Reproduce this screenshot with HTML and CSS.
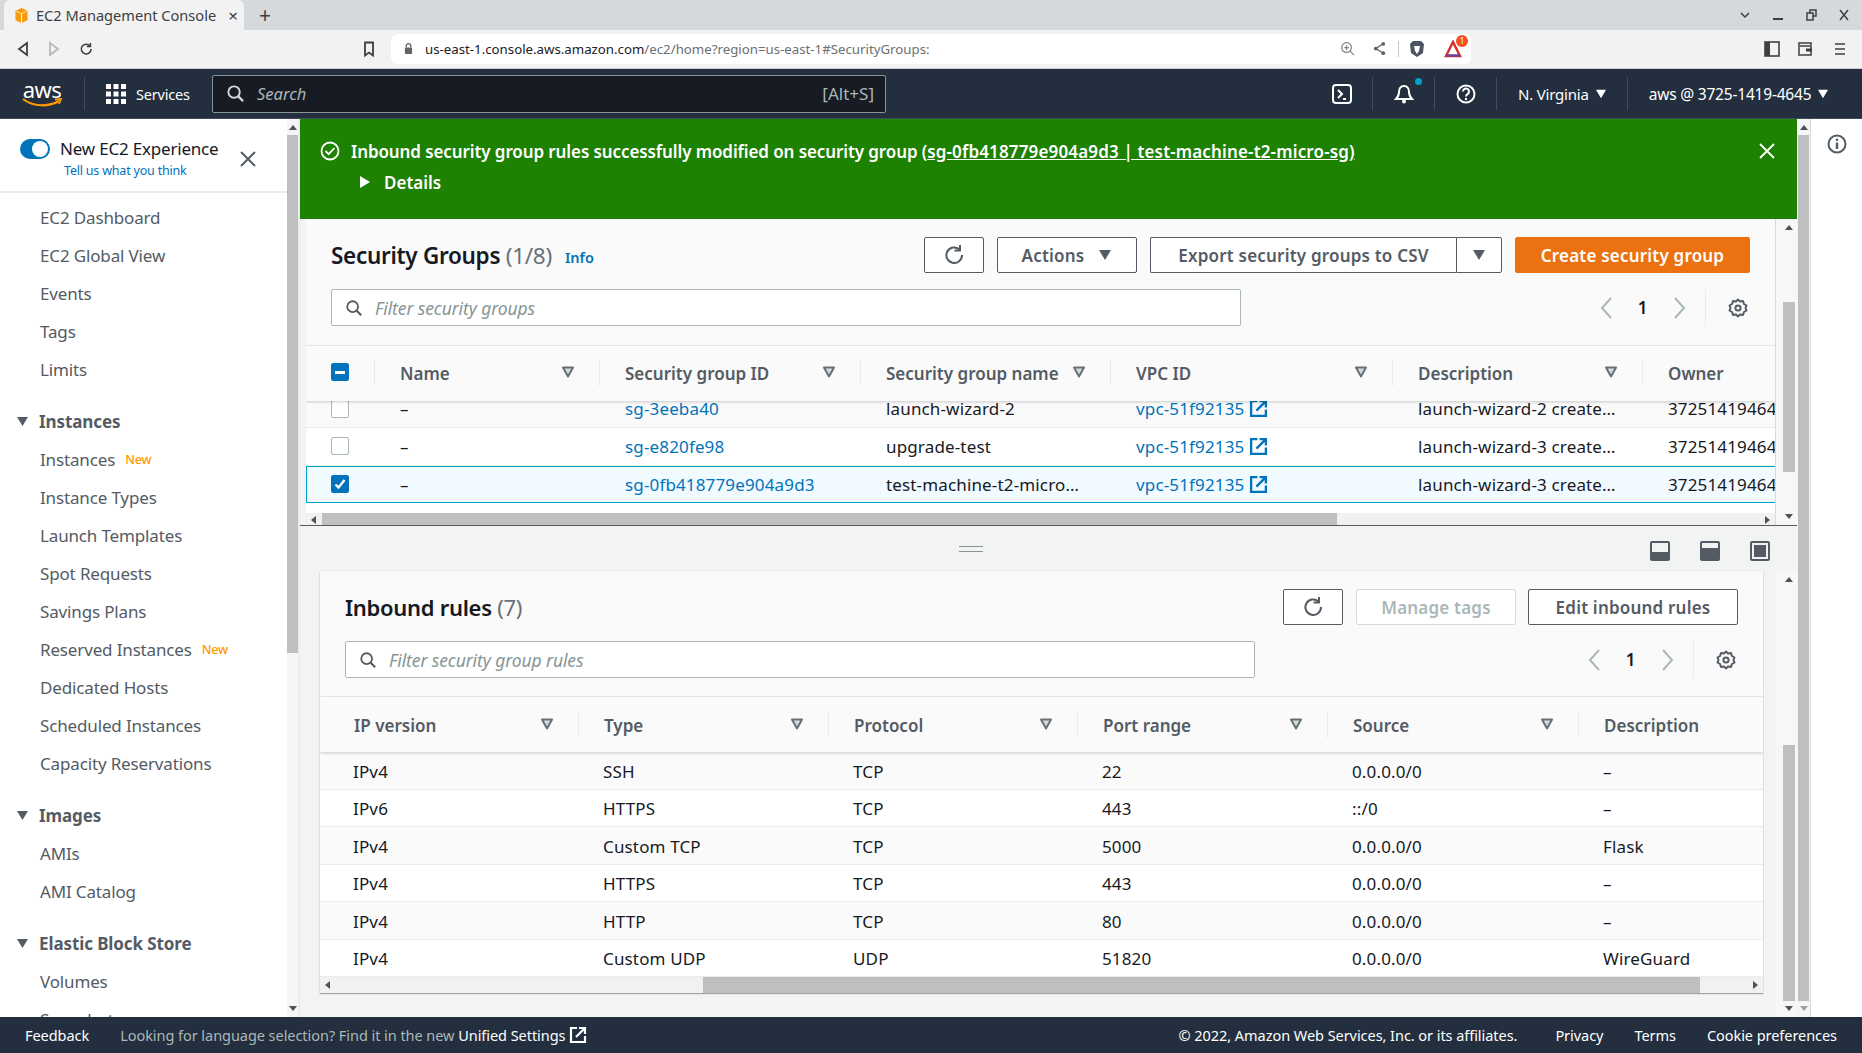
FILE: index.html
```html
<!DOCTYPE html>
<html lang="en">

<head>
  <meta charset="UTF-8">
  <meta name="viewport" content="width=device-width, initial-scale=1.0">
  <title>EC2 Management Console</title>
  <link rel="stylesheet" href="styles.css">
</head>

<body>
  <!-- shared icons -->
  <svg class="sprite" xmlns="http://www.w3.org/2000/svg">
    <symbol id="i-sort" viewBox="0 0 14 14"><path d="M2 2.500h10L7 11.500z" fill="#d5dbdb" stroke="#687078" stroke-width="2" stroke-linejoin="round"/></symbol>
    <symbol id="i-ext" viewBox="0 0 18 18"><path d="M8 2H2v14h14v-6" fill="none" stroke="currentColor" stroke-width="2.200"/><path d="M7 11l8-8M10 2h6v6" fill="none" stroke="currentColor" stroke-width="2.200"/></symbol>
    <symbol id="i-refresh" viewBox="0 0 22 22"><path d="M16.500 5.500a7.800 7.800 0 1 0 2.500 5.500" fill="none" stroke="#545b64" stroke-width="2"/><path d="M17 1v5.500h-5.500" fill="none" stroke="#545b64" stroke-width="2"/></symbol>
    <symbol id="i-search" viewBox="0 0 20 20"><circle cx="8.500" cy="8.500" r="6" fill="none" stroke="currentColor" stroke-width="2"/><path d="M13 13l5 5" stroke="currentColor" stroke-width="2.400"/></symbol>
    <symbol id="i-gear" viewBox="0 0 20 20"><path d="M10 1.500l2 2 3-.4 1 2.900 2.500 1.500-1 2.500 1 2.500-2.500 1.500-1 2.900-3-.4-2 2-2-2-3 .4-1-2.900L1.500 12.500l1-2.500-1-2.500L4 6l1-2.900 3 .4z" fill="none" stroke="#545b64" stroke-width="2" stroke-linejoin="round"/><circle cx="10" cy="10" r="2.600" fill="none" stroke="#545b64" stroke-width="2"/></symbol>
    <symbol id="i-left" viewBox="0 0 14 24"><path d="M12 2L3 12l9 10" fill="none" stroke="#aab7b8" stroke-width="2"/></symbol>
    <symbol id="i-right" viewBox="0 0 14 24"><path d="M2 2l9 10-9 10" fill="none" stroke="#aab7b8" stroke-width="2"/></symbol>
    <symbol id="i-caret" viewBox="0 0 14 12"><path d="M1 1h12L7 11z" fill="currentColor"/></symbol>
    <symbol id="i-check" viewBox="0 0 16 16"><path d="M3.500 8.500l3 3 6-7.500" fill="none" stroke="#fff" stroke-width="2.400"/></symbol>
  </svg>

  <div class="tabstrip">
    <div class="tab">
      <svg class="favicon" viewBox="0 0 14 16"><path d="M7 0l6.500 3v10L7 16 .5 13V3z" fill="#f39c12"/><path d="M7 6v10" stroke="#fff" stroke-width="1"/><path d="M.5 3L7 6l6.500-3" fill="none" stroke="#fde3a7" stroke-width="1"/></svg>
      <span class="tab-title">EC2 Management Console</span>
      <span class="tab-close">×</span>
    </div>
    <span class="tab-new">+</span>
    <div class="window-btns">
      <svg viewBox="0 0 12 12"><path d="M2 4l4 4 4-4" fill="none" stroke="#3c4043" stroke-width="1.500"/></svg>
      <svg viewBox="0 0 12 12"><path d="M1 10h10" stroke="#3c4043" stroke-width="2"/></svg>
      <svg viewBox="0 0 12 12"><path d="M2 4h6v7H2zM5 4V1h6v6H8" fill="none" stroke="#3c4043" stroke-width="1.500"/></svg>
      <svg viewBox="0 0 12 12"><path d="M2 1l8 10M10 1L2 11" stroke="#3c4043" stroke-width="1.500"/></svg>
    </div>
  </div>

  <div class="toolbar">
    <svg class="tool-ic back" viewBox="0 0 14 16"><path d="M11 2L3 8l8 6z" fill="none" stroke="#3c4043" stroke-width="1.800"/></svg>
    <svg class="tool-ic fwd" viewBox="0 0 14 16"><path d="M3 2l8 6-8 6z" fill="none" stroke="#b5b9bd" stroke-width="1.800"/></svg>
    <svg class="tool-ic reload" viewBox="0 0 16 16"><path d="M12.500 4.500a5.600 5.600 0 1 0 1.300 3.500" fill="none" stroke="#3c4043" stroke-width="1.800"/><path d="M13 1v4H9" fill="none" stroke="#3c4043" stroke-width="1.800"/></svg>
    <svg class="tool-ic bookmark" viewBox="0 0 12 16"><path d="M2 1.500h8v13l-4-3-4 3z" fill="none" stroke="#3c4043" stroke-width="1.800"/></svg>
    <div class="address">
      <svg class="lock" viewBox="0 0 10 14"><path d="M2.500 6V4a2.500 2.500 0 0 1 5 0v2" fill="none" stroke="#5f6368" stroke-width="1.400"/><rect x="1" y="6" width="8" height="7" rx="1" fill="#5f6368"/></svg>
      <span class="url"><span class="url-host">us-east-1.console.aws.amazon.com</span>/ec2/home?region=us-east-1#SecurityGroups:</span>
      <svg class="addr-ic zoom-ic" viewBox="0 0 16 16"><circle cx="7" cy="7" r="5.200" fill="none" stroke="#80868b" stroke-width="1.300"/><path d="M11 11l4 4M7 4.500v5M4.500 7h5" stroke="#80868b" stroke-width="1.300"/></svg>
      <svg class="addr-ic share-ic" viewBox="0 0 16 16"><path d="M12 3L4 8l8 5" fill="none" stroke="#5f6368" stroke-width="1.400"/><circle cx="12" cy="3" r="2" fill="#5f6368"/><circle cx="4" cy="8" r="2" fill="#5f6368"/><circle cx="12" cy="13" r="2" fill="#5f6368"/></svg>
      <span class="addr-sep"></span>
      <svg class="addr-ic brave-ic" viewBox="0 0 16 18"><path d="M4 1h8l3 3-1 9-6 4-6-4-1-9z" fill="#4b5563"/><path d="M5 6h6l-1 5-2 3-2-3z" fill="#fff"/></svg>
      <span class="rewards">
        <svg viewBox="0 0 18 18"><path d="M9 2l7 14H2z" fill="none" stroke="#d32f2f" stroke-width="2.400"/><path d="M2.500 15.500h13" stroke="#6b3fa0" stroke-width="2.400"/></svg>
        <span class="rewards-badge">1</span>
      </span>
    </div>
    <svg class="tool-ic sidebar-ic" viewBox="0 0 16 16"><rect x="1" y="1" width="14" height="14" fill="none" stroke="#3c4043" stroke-width="1.600"/><rect x="1" y="1" width="5" height="14" fill="#3c4043"/></svg>
    <svg class="tool-ic wallet-ic" viewBox="0 0 16 16"><path d="M14 4V2H2v12h12V5H3" fill="none" stroke="#3c4043" stroke-width="1.500"/><rect x="9" y="7.500" width="6" height="3" fill="#3c4043"/></svg>
    <svg class="tool-ic menu-ic" viewBox="0 0 16 16"><path d="M3 3h10M3 8h10M3 13h10" stroke="#3c4043" stroke-width="1.600"/></svg>
  </div>

  <header class="topnav">
    <div class="aws-logo">
      <span class="aws-word">aws</span>
      <svg viewBox="0 0 40 10"><path d="M1 1c10 8 26 8 36 2" fill="none" stroke="#ff9900" stroke-width="2.200"/><path d="M33 1.500l6-.5-2 5" fill="none" stroke="#ff9900" stroke-width="1.800"/></svg>
    </div>
    <span class="nav-sep first"></span>
    <svg class="grid-ic" viewBox="0 0 20 20"><path d="M0 0h5v5H0zM7.500 0h5v5h-5zM15 0h5v5h-5zM0 7.500h5v5H0zM7.500 7.500h5v5h-5zM15 7.500h5v5h-5zM0 15h5v5H0zM7.500 15h5v5h-5zM15 15h5v5h-5z" fill="#fff"/></svg>
    <span class="services">Services</span>
    <div class="search">
      <svg class="search-ic" viewBox="0 0 20 20"><use href="#i-search"/></svg>
      <span class="search-text">Search</span>
      <span class="search-key">[Alt+S]</span>
    </div>
    <svg class="nav-ic shell-ic" viewBox="0 0 20 20"><rect x="1" y="1" width="18" height="18" rx="3" fill="none" stroke="#fff" stroke-width="2"/><path d="M6 6l4 4-4 4M11 15h3" fill="none" stroke="#fff" stroke-width="2"/></svg>
    <span class="nav-sep"></span>
    <span class="bell">
      <svg class="nav-ic" viewBox="0 0 20 20"><path d="M10 2c3.500 0 5 3 5 6 0 3 1 5 3 7H2c2-2 3-4 3-7 0-3 1.500-6 5-6z" fill="none" stroke="#fff" stroke-width="2"/><circle cx="10" cy="17.500" r="2" fill="#fff"/></svg>
      <span class="bell-dot"></span>
    </span>
    <span class="nav-sep"></span>
    <svg class="nav-ic help-ic" viewBox="0 0 20 20"><circle cx="10" cy="10" r="8.500" fill="none" stroke="#fff" stroke-width="2"/><path d="M7 7.500a3 3 0 1 1 4.500 2.600c-1 .6-1.500 1.200-1.500 2.400" fill="none" stroke="#fff" stroke-width="2"/><circle cx="10" cy="15" r="1.200" fill="#fff"/></svg>
    <span class="nav-sep"></span>
    <span class="nav-menu region">N. Virginia <svg viewBox="0 0 14 12"><use href="#i-caret"/></svg></span>
    <span class="nav-sep"></span>
    <span class="nav-menu account">aws @ 3725-1419-4645 <svg viewBox="0 0 14 12"><use href="#i-caret"/></svg></span>
  </header>

  <div class="layout">
    <aside class="sidebar">
      <div class="side-col">
        <div class="experience">
          <span class="toggle"></span>
          <div class="exp-text">
            <div class="exp-title">New EC2 Experience</div>
            <div class="exp-link">Tell us what you think</div>
          </div>
          <svg class="exp-close" viewBox="0 0 16 16"><path d="M1 1l14 14M15 1L1 15" stroke="#545b64" stroke-width="2"/></svg>
        </div>
        <nav class="side-nav">
          <a class="side-item">EC2 Dashboard</a>
          <a class="side-item">EC2 Global View</a>
          <a class="side-item">Events</a>
          <a class="side-item">Tags</a>
          <a class="side-item">Limits</a>
          <div class="side-head"><svg viewBox="0 0 14 12"><use href="#i-caret"/></svg>Instances</div>
          <a class="side-item">Instances <span class="new">New</span></a>
          <a class="side-item">Instance Types</a>
          <a class="side-item">Launch Templates</a>
          <a class="side-item">Spot Requests</a>
          <a class="side-item">Savings Plans</a>
          <a class="side-item">Reserved Instances <span class="new">New</span></a>
          <a class="side-item">Dedicated Hosts</a>
          <a class="side-item">Scheduled Instances</a>
          <a class="side-item">Capacity Reservations</a>
          <div class="side-head"><svg viewBox="0 0 14 12"><use href="#i-caret"/></svg>Images</div>
          <a class="side-item">AMIs</a>
          <a class="side-item">AMI Catalog</a>
          <div class="side-head"><svg viewBox="0 0 14 12"><use href="#i-caret"/></svg>Elastic Block Store</div>
          <a class="side-item">Volumes</a>
          <a class="side-item">Snapshots</a>
        </nav>
      </div>
      <div class="vscroll side-scroll">
        <span class="arrow up"></span>
        <span class="thumb"></span>
        <span class="arrow down"></span>
      </div>
    </aside>

    <main class="main">
      <div class="banner">
        <div class="banner-line">
          <svg class="banner-ic" viewBox="0 0 20 20"><circle cx="10" cy="10" r="8.500" fill="none" stroke="#fff" stroke-width="1.800"/><path d="M5.500 10l3.200 3.200 5.800-6.200" fill="none" stroke="#fff" stroke-width="1.800"/></svg>
          <span>Inbound security group rules successfully modified on security group (<u>sg-0fb418779e904a9d3 | test-machine-t2-micro-sg)</u></span>
          <svg class="banner-close" viewBox="0 0 16 16"><path d="M1 1l14 14M15 1L1 15" stroke="#fff" stroke-width="1.800"/></svg>
        </div>
        <div class="banner-details"><span class="tri"></span>Details</div>
      </div>

      <section class="top-pane">
        <div class="top-content">
          <div class="pane-head">
            <div class="title-row">
              <h2 class="pane-title">Security Groups <span class="count">(1/8)</span></h2>
              <a class="info">Info</a>
              <div class="actions">
                <button class="btn btn-icon"><svg viewBox="0 0 22 22"><use href="#i-refresh"/></svg></button>
                <button class="btn btn-actions">Actions <svg viewBox="0 0 14 12"><use href="#i-caret"/></svg></button>
                <div class="split">
                  <button class="btn btn-export">Export security groups to CSV</button>
                  <button class="btn btn-drop"><svg viewBox="0 0 14 12"><use href="#i-caret"/></svg></button>
                </div>
                <button class="btn btn-primary">Create security group</button>
              </div>
            </div>
            <div class="filter-row">
              <div class="filter"><svg viewBox="0 0 20 20"><use href="#i-search"/></svg><span>Filter security groups</span></div>
              <div class="pager">
                <span class="pg"><svg viewBox="0 0 14 24"><use href="#i-left"/></svg></span>
                <span class="pg pg-num">1</span>
                <span class="pg"><svg viewBox="0 0 14 24"><use href="#i-right"/></svg></span>
                <span class="pg-gear"><svg viewBox="0 0 20 20"><use href="#i-gear"/></svg></span>
              </div>
            </div>
          </div>

          <div class="thead sg-cols">
            <div class="th th-check"><span class="cb cb-mixed"></span></div>
            <div class="th"><span>Name</span><svg viewBox="0 0 14 14"><use href="#i-sort"/></svg></div>
            <div class="th"><span>Security group ID</span><svg viewBox="0 0 14 14"><use href="#i-sort"/></svg></div>
            <div class="th"><span>Security group name</span><svg viewBox="0 0 14 14"><use href="#i-sort"/></svg></div>
            <div class="th"><span>VPC ID</span><svg viewBox="0 0 14 14"><use href="#i-sort"/></svg></div>
            <div class="th"><span>Description</span><svg viewBox="0 0 14 14"><use href="#i-sort"/></svg></div>
            <div class="th th-last"><span>Owner</span></div>
          </div>
          <div class="sg-rows">
            <div class="tr sg-cols clipped">
              <div class="td td-check"><span class="cb"></span></div>
              <div class="td">–</div>
              <div class="td"><a class="link">sg-3eeba40</a></div>
              <div class="td">launch-wizard-2</div>
              <div class="td"><a class="link">vpc-51f92135 <svg viewBox="0 0 18 18"><use href="#i-ext"/></svg></a></div>
              <div class="td">launch-wizard-2 create…</div>
              <div class="td">372514194645</div>
            </div>
            <div class="tr sg-cols">
              <div class="td td-check"><span class="cb"></span></div>
              <div class="td">–</div>
              <div class="td"><a class="link">sg-e820fe98</a></div>
              <div class="td">upgrade-test</div>
              <div class="td"><a class="link">vpc-51f92135 <svg viewBox="0 0 18 18"><use href="#i-ext"/></svg></a></div>
              <div class="td">launch-wizard-3 create…</div>
              <div class="td">372514194645</div>
            </div>
            <div class="tr sg-cols selected">
              <div class="td td-check"><span class="cb cb-on"><svg viewBox="0 0 16 16"><use href="#i-check"/></svg></span></div>
              <div class="td">–</div>
              <div class="td"><a class="link">sg-0fb418779e904a9d3</a></div>
              <div class="td">test-machine-t2-micro…</div>
              <div class="td"><a class="link">vpc-51f92135 <svg viewBox="0 0 18 18"><use href="#i-ext"/></svg></a></div>
              <div class="td">launch-wizard-3 create…</div>
              <div class="td">372514194645</div>
            </div>
          </div>
          <div class="hscroll sg-hscroll"><span class="arrow left"></span><span class="thumb"></span><span class="arrow right"></span></div>
        </div>
        <div class="vscroll inner-scroll top-scroll">
          <span class="arrow up"></span>
          <span class="thumb"></span>
          <span class="arrow down"></span>
        </div>
      </section>

      <section class="bottom-pane">
        <div class="split-bar">
          <span class="handle"></span>
          <div class="view-btns">
            <svg viewBox="0 0 20 20"><rect x="1" y="1" width="18" height="18" rx="1" fill="none" stroke="#545b64" stroke-width="2"/><rect x="1" y="11" width="18" height="8" fill="#545b64"/></svg>
            <svg viewBox="0 0 20 20"><rect x="1" y="1" width="18" height="18" rx="1" fill="none" stroke="#545b64" stroke-width="2"/><rect x="1" y="7" width="18" height="12" fill="#545b64"/></svg>
            <svg viewBox="0 0 20 20"><rect x="1" y="1" width="18" height="18" rx="1" fill="none" stroke="#545b64" stroke-width="2"/><rect x="4" y="4" width="12" height="12" fill="#545b64"/></svg>
          </div>
        </div>
        <div class="bottom-row">
          <div class="card-wrap">
            <div class="card">
              <div class="pane-head">
                <div class="title-row">
                  <h2 class="pane-title">Inbound rules <span class="count">(7)</span></h2>
                  <div class="actions">
                    <button class="btn btn-icon"><svg viewBox="0 0 22 22"><use href="#i-refresh"/></svg></button>
                    <button class="btn btn-disabled">Manage tags</button>
                    <button class="btn btn-edit">Edit inbound rules</button>
                  </div>
                </div>
                <div class="filter-row">
                  <div class="filter"><svg viewBox="0 0 20 20"><use href="#i-search"/></svg><span>Filter security group rules</span></div>
                  <div class="pager">
                    <span class="pg"><svg viewBox="0 0 14 24"><use href="#i-left"/></svg></span>
                    <span class="pg pg-num">1</span>
                    <span class="pg"><svg viewBox="0 0 14 24"><use href="#i-right"/></svg></span>
                    <span class="pg-gear"><svg viewBox="0 0 20 20"><use href="#i-gear"/></svg></span>
                  </div>
                </div>
              </div>
              <div class="thead rule-cols">
                <div class="th"><span>IP version</span><svg viewBox="0 0 14 14"><use href="#i-sort"/></svg></div>
                <div class="th"><span>Type</span><svg viewBox="0 0 14 14"><use href="#i-sort"/></svg></div>
                <div class="th"><span>Protocol</span><svg viewBox="0 0 14 14"><use href="#i-sort"/></svg></div>
                <div class="th"><span>Port range</span><svg viewBox="0 0 14 14"><use href="#i-sort"/></svg></div>
                <div class="th"><span>Source</span><svg viewBox="0 0 14 14"><use href="#i-sort"/></svg></div>
                <div class="th th-last"><span>Description</span></div>
              </div>
              <div class="tr rule-cols odd"><div class="td">IPv4</div><div class="td">SSH</div><div class="td">TCP</div><div class="td">22</div><div class="td">0.0.0.0/0</div><div class="td">–</div></div>
              <div class="tr rule-cols"><div class="td">IPv6</div><div class="td">HTTPS</div><div class="td">TCP</div><div class="td">443</div><div class="td">::/0</div><div class="td">–</div></div>
              <div class="tr rule-cols odd"><div class="td">IPv4</div><div class="td">Custom TCP</div><div class="td">TCP</div><div class="td">5000</div><div class="td">0.0.0.0/0</div><div class="td">Flask</div></div>
              <div class="tr rule-cols"><div class="td">IPv4</div><div class="td">HTTPS</div><div class="td">TCP</div><div class="td">443</div><div class="td">0.0.0.0/0</div><div class="td">–</div></div>
              <div class="tr rule-cols odd"><div class="td">IPv4</div><div class="td">HTTP</div><div class="td">TCP</div><div class="td">80</div><div class="td">0.0.0.0/0</div><div class="td">–</div></div>
              <div class="tr rule-cols"><div class="td">IPv4</div><div class="td">Custom UDP</div><div class="td">UDP</div><div class="td">51820</div><div class="td">0.0.0.0/0</div><div class="td">WireGuard</div></div>
              <div class="hscroll rule-hscroll"><span class="arrow left"></span><span class="thumb"></span><span class="arrow right"></span></div>
            </div>
          </div>
          <div class="vscroll inner-scroll bottom-scroll">
            <span class="arrow up"></span>
            <span class="thumb"></span>
            <span class="arrow down"></span>
          </div>
        </div>
      </section>
    </main>

    <div class="vscroll outer-scroll">
      <span class="arrow up"></span>
      <span class="thumb"></span>
      <span class="arrow down dim"></span>
    </div>

    <aside class="rail">
      <svg viewBox="0 0 20 20"><circle cx="10" cy="10" r="8.500" fill="none" stroke="#545b64" stroke-width="2"/><circle cx="10" cy="5.800" r="1.300" fill="#545b64"/><path d="M10 8.500v6.500" stroke="#545b64" stroke-width="2.400"/></svg>
    </aside>
  </div>

  <footer class="footer">
    <a class="foot-feedback">Feedback</a>
    <span class="foot-lang">Looking for language selection? Find it in the new <a>Unified Settings</a></span>
    <svg class="foot-ext" viewBox="0 0 18 18"><use href="#i-ext"/></svg>
    <span class="foot-copy">© 2022, Amazon Web Services, Inc. or its affiliates.</span>
    <a class="foot-link">Privacy</a>
    <a class="foot-link">Terms</a>
    <a class="foot-link">Cookie preferences</a>
  </footer>
</body>

</html>
```

FILE: styles.css
```css
* {
  box-sizing: border-box;
}

html,
body {
  margin: 0;
  height: 100%;
}

body {
  width: 1862px;
  height: 1053px;
  overflow: hidden;
  display: flex;
  flex-direction: column;
  font-family: "Noto Sans", sans-serif;
  font-size: 15px;
  color: #16191f;
  background-color: #fff;
}

svg {
  display: block;
  flex: none;
}

.sprite {
  width: 0;
  height: 0;
  position: absolute;
}

/* browser chrome */
.tabstrip {
  height: 30px;
  flex: none;
  display: flex;
  align-items: flex-end;
  background-color: #d6d9dc;
  padding-left: 4px;
}

.tab {
  width: 240px;
  height: 30px;
  display: flex;
  align-items: center;
  padding: 0 6px 0 11px;
  background-color: #f2f2f2;
  border-radius: 6px 6px 0 0;
}

.favicon {
  width: 13px;
  height: 15px;
}

.tab-title {
  margin-left: 8px;
  font-size: 14.6px;
  color: #3c4043;
  white-space: nowrap;
  flex: 1;
}

.tab-close {
  font-size: 17px;
  color: #3c4043;
  line-height: 1;
}

.tab-new {
  margin-left: 15px;
  align-self: center;
  font-size: 21px;
  line-height: 1;
  color: #3c4043;
}

.window-btns {
  margin-left: auto;
  align-self: center;
  display: flex;
  gap: 21px;
  padding-right: 12px;
}

.window-btns svg {
  width: 12px;
  height: 12px;
}

.toolbar {
  height: 39px;
  flex: none;
  display: flex;
  align-items: center;
  padding: 0 0 1px 16px;
  background-color: #f2f2f2;
  border-bottom: 1px solid #c8cacc;
}

.tool-ic {
  width: 14px;
  height: 16px;
}

.fwd {
  margin-left: 17px;
}

.reload {
  margin-left: 18px;
}

.bookmark {
  margin-left: 269px;
}

.address {
  width: 1080px;
  height: 30px;
  margin-left: 15px;
  display: flex;
  align-items: center;
  padding-left: 13px;
  background-color: #fff;
  border-radius: 6px;
}

.lock {
  width: 9px;
  height: 13px;
}

.url {
  margin-left: 12px;
  font-size: 13.25px;
  color: #6b7075;
  white-space: nowrap;
  flex: 1;
}

.url-host {
  color: #202124;
}

.addr-ic {
  width: 15px;
  height: 15px;
}

.share-ic {
  margin-left: 17px;
}

.addr-sep {
  width: 1px;
  height: 16px;
  margin-left: 11px;
  background-color: #c4c7ca;
}

.brave-ic {
  width: 16px;
  height: 18px;
  margin-left: 10px;
}

.rewards {
  position: relative;
  margin: 0 9px 0 19px;
}

.rewards svg {
  width: 18px;
  height: 18px;
}

.rewards-badge {
  position: absolute;
  top: -5px;
  right: -6px;
  width: 12px;
  height: 12px;
  border-radius: 50%;
  font-size: 8px;
  line-height: 12px;
  text-align: center;
  color: #fff;
  background-color: #f4511e;
}

.sidebar-ic {
  width: 16px;
  margin-left: 293px;
}

.wallet-ic {
  width: 16px;
  margin-left: 17px;
}

.menu-ic {
  width: 16px;
  margin-left: 19px;
}

/* console header */
.topnav {
  height: 50px;
  flex: none;
  display: flex;
  align-items: center;
  padding-left: 22px;
  color: #fff;
  background-color: #232f3e;
  border-bottom: 1px solid #414d5c;
}

.aws-logo {
  width: 40px;
  display: flex;
  flex-direction: column;
  align-items: center;
}

.aws-word {
  font-size: 22px;
  line-height: 18px;
  letter-spacing: -0.5px;
}

.aws-logo svg {
  width: 40px;
  height: 10px;
}

.nav-sep {
  width: 1px;
  height: 33px;
  background-color: #414d5c;
  margin: 0 21px 0 20px;
}

.nav-sep.first {
  margin: 0 21px 0 22px;
}

.grid-ic {
  width: 20px;
  height: 20px;
}

.services {
  margin-left: 10px;
  font-size: 14.5px;
  letter-spacing: -0.2px;
  width: 76px;
}

.search {
  width: 674px;
  height: 38px;
  display: flex;
  align-items: center;
  padding: 0 11px 0 13px;
  background-color: #161b24;
  border: 1px solid #879596;
  border-radius: 2px;
  color: #aab7b8;
}

.search-ic {
  width: 19px;
  height: 19px;
  color: #d5dbdb;
}

.search-text {
  margin-left: 12px;
  font-style: italic;
  font-size: 16.5px;
  flex: 1;
}

.search-key {
  font-size: 17px;
}

.nav-ic {
  width: 20px;
  height: 20px;
}

.shell-ic {
  margin-left: 446px;
}

.bell {
  position: relative;
}

.bell-dot {
  position: absolute;
  top: -6px;
  right: -8px;
  width: 7px;
  height: 7px;
  border-radius: 50%;
  background-color: #00a1c9;
}

.nav-menu {
  display: flex;
  align-items: center;
  gap: 6px;
  white-space: nowrap;
}

.nav-menu svg {
  width: 12px;
  height: 10px;
}

.region {
  font-size: 15px;
  letter-spacing: -0.2px;
}

.account {
  font-size: 15.5px;
  letter-spacing: -0.2px;
}

/* page body */
.layout {
  flex: 1;
  min-height: 0;
  display: flex;
}

.sidebar {
  width: 300px;
  flex: none;
  display: flex;
  background-color: #fff;
  border-right: 2px solid #eaeded;
}

.side-col {
  width: 287px;
  overflow: hidden;
}

.experience {
  height: 74px;
  display: flex;
  align-items: flex-start;
  padding: 19px 0 0 20px;
  border-bottom: 2px solid #eaeded;
}

.toggle {
  position: relative;
  width: 30px;
  height: 20px;
  margin-top: 1px;
  border-radius: 10px;
  background-color: #0073bb;
}

.toggle::after {
  content: "";
  position: absolute;
  right: 2px;
  top: 2px;
  width: 16px;
  height: 16px;
  border-radius: 50%;
  background-color: #fff;
}

.exp-text {
  margin-left: 10px;
  width: 172px;
}

.exp-title {
  font-size: 17px;
  line-height: 22px;
  white-space: nowrap;
  letter-spacing: -0.2px;
}

.exp-link {
  margin: 3px 0 0 4px;
  font-size: 12.5px;
  line-height: 16px;
  color: #0073bb;
  white-space: nowrap;
  letter-spacing: -0.2px;
}

.exp-close {
  width: 16px;
  height: 16px;
  margin: 13px 0 0 8px;
}

.side-nav {
  padding-top: 5px;
}

.side-item {
  display: flex;
  align-items: center;
  height: 38px;
  padding-left: 40px;
  color: #545b64;
  font-size: 17px;
  white-space: nowrap;
  letter-spacing: -0.15px;
}

.side-head {
  display: flex;
  align-items: center;
  gap: 10px;
  height: 38px;
  margin-top: 14px;
  padding-left: 16px;
  font-size: 17px;
  font-weight: 700;
  color: #545b64;
  letter-spacing: -0.1px;
}

.side-head svg {
  width: 13px;
  height: 11px;
}

.new {
  margin-left: 10px;
  font-size: 12.5px;
  color: #ff9900;
  font-weight: 500;
}

/* scrollbars */
.vscroll {
  width: 11px;
  flex: none;
  display: flex;
  flex-direction: column;
  align-items: center;
  background-color: #f5f5f5;
}

.vscroll .thumb {
  flex: 1;
  width: 100%;
  background-color: #bfbfbf;
}

.arrow {
  flex: none;
  width: 0;
  height: 0;
  border-style: solid;
  border-color: transparent;
}

.arrow.up {
  margin: 6px 0 5px;
  border-width: 0 4px 5px;
  border-bottom-color: #505050;
}

.arrow.down {
  margin: 5px 0 6px;
  border-width: 5px 4px 0;
  border-top-color: #505050;
}

.arrow.down.dim {
  border-top-color: #a0a0a0;
}

.arrow.left {
  margin: 0 6px 0 5px;
  border-width: 4px 5px 4px 0;
  border-right-color: #505050;
}

.arrow.right {
  margin: 0 5px 0 6px;
  border-width: 4px 0 4px 5px;
  border-left-color: #505050;
}

.side-scroll .thumb {
  flex: none;
  height: 518px;
  margin-bottom: auto;
}

.main {
  width: 1497px;
  flex: none;
  display: flex;
  flex-direction: column;
}

.outer-scroll {
  width: 14px;
  padding: 0 1px;
  border-right: 1px solid #d5dbdb;
}

.rail {
  flex: 1;
  display: flex;
  justify-content: center;
  padding-top: 15px;
}

.rail svg {
  width: 20px;
  height: 20px;
}

/* flash banner */
.banner {
  height: 100px;
  flex: none;
  padding: 22px 22px 0 20px;
  color: #fff;
  font-weight: 600;
  background-color: #1d8102;
}

.banner-line {
  display: flex;
  align-items: center;
  height: 20px;
  font-size: 17px;
  letter-spacing: -0.1px;
}

.banner-line u {
  letter-spacing: 0.15px;
}

.banner-ic {
  width: 20px;
  height: 20px;
  margin-right: 11px;
}

.banner-close {
  width: 16px;
  height: 16px;
  margin-left: auto;
}

.banner-details {
  display: flex;
  align-items: center;
  margin: 11px 0 0 40px;
  font-size: 17px;
  height: 20px;
}

.tri {
  width: 0;
  height: 0;
  margin-right: 14px;
  border-style: solid;
  border-width: 6px 0 6px 10px;
  border-color: transparent transparent transparent #fff;
}

/* panes */
.top-pane {
  height: 307px;
  flex: none;
  display: flex;
  padding-left: 6px;
  background-color: #f2f3f3;
  border-bottom: 1px solid #545b64;
}

.top-content {
  width: 1470px;
  flex: none;
  min-width: 0;
  display: flex;
  flex-direction: column;
  overflow: hidden;
  background-color: #fff;
  border-right: 1px solid #d5dbdb;
}

.inner-scroll {
  width: 21px;
  padding: 0 2px 0 7px;
  background-color: #f7f7f7;
}

.pane-head {
  flex: none;
  padding: 18px 25px 0;
  background-color: #fafafa;
  border-bottom: 1px solid #eaeded;
}

.title-row {
  height: 36px;
  display: flex;
  align-items: center;
}

.pane-title {
  margin: 0;
  font-size: 22.5px;
  font-weight: 600;
  letter-spacing: -0.3px;
  white-space: nowrap;
}

.count {
  font-weight: 400;
  color: #687078;
}

.info {
  margin: 4px 0 0 13px;
  font-size: 14.5px;
  font-weight: 600;
  color: #0073bb;
}

.actions {
  margin-left: auto;
  display: flex;
  gap: 13px;
}

.btn {
  height: 36px;
  padding: 0;
  display: flex;
  align-items: center;
  justify-content: center;
  font-family: inherit;
  font-size: 17px;
  font-weight: 600;
  color: #545b64;
  background-color: #fff;
  border: 1px solid #545b64;
  border-radius: 2px;
  letter-spacing: 0.2px;
}

.btn svg {
  width: 22px;
  height: 22px;
}

.btn-icon {
  width: 60px;
}

.btn-actions {
  width: 140px;
  gap: 14px;
}

.btn-actions svg,
.btn-drop svg {
  width: 14px;
  height: 12px;
}

.split {
  display: flex;
}

.btn-export {
  width: 306px;
  border-right: 0;
  border-radius: 2px 0 0 2px;
}

.btn-drop {
  width: 46px;
  border-radius: 0 2px 2px 0;
}

.btn-primary {
  width: 235px;
  color: #fff;
  background-color: #ec7211;
  border-color: #ec7211;
}

.btn-disabled {
  width: 160px;
  color: #aab7b8;
  border-color: #d5dbdb;
}

.btn-edit {
  width: 210px;
  margin-left: -1px;
}

.filter-row {
  height: 37px;
  margin: 16px 0 19px;
  display: flex;
  align-items: center;
  justify-content: space-between;
}

.filter {
  width: 910px;
  height: 37px;
  display: flex;
  align-items: center;
  padding-left: 13px;
  color: #545b64;
  background-color: #fff;
  border: 1px solid #aab7b8;
  border-radius: 2px;
}

.filter svg {
  width: 18px;
  height: 18px;
}

.filter span {
  margin-left: 12px;
  font-style: italic;
  font-size: 17.5px;
  color: #879596;
  letter-spacing: -0.1px;
}

.pager {
  display: flex;
  align-items: center;
  height: 37px;
}

.pg {
  width: 37px;
  display: flex;
  justify-content: center;
}

.pg svg {
  width: 14px;
  height: 24px;
}

.pg-num {
  font-size: 17px;
  font-weight: 600;
}

.pg-gear {
  height: 37px;
  width: 45px;
  margin-left: 7px;
  padding-left: 22px;
  display: flex;
  align-items: center;
  border-left: 1px solid #eaeded;
}

.pg-gear svg {
  width: 20px;
  height: 20px;
}

/* tables */
.sg-cols {
  display: grid;
  grid-template-columns: 69px 225px 261px 250px 282px 250px 300px;
}

.rule-cols {
  display: grid;
  grid-template-columns: 259px 250px 249px 250px 251px 300px;
}

.thead {
  height: 55px;
  flex: none;
  position: relative;
  z-index: 1;
  background-color: #fafafa;
  box-shadow: 0 1px 3px rgba(0, 0, 0, 0.2);
}

.th {
  display: flex;
  align-items: center;
  justify-content: space-between;
  height: 26px;
  margin-top: 14px;
  padding: 0 24px 0 25px;
  font-size: 17px;
  font-weight: 600;
  color: #545b64;
  border-right: 1px solid #eaeded;
  white-space: nowrap;
}

.th svg {
  width: 14px;
  height: 14px;
  margin-top: -3px;
}

.th-last {
  border-right: 0;
}

.th-check .cb {
  margin-top: -2px;
}

.sg-rows {
  height: 112px;
  flex: none;
  overflow: hidden;
  background-color: #fff;
}

.tr {
  height: 37.5px;
  font-size: 17px;
  background-color: #fff;
  border-bottom: 1px solid #eaeded;
  letter-spacing: 0.15px;
}

.clipped {
  margin-top: -10.5px;
  background-color: #fafafa;
}

.td {
  display: flex;
  align-items: center;
  padding-left: 25px;
  white-space: nowrap;
  overflow: hidden;
}

.selected {
  background-color: #f1faff;
  border-top: 1px solid #00a1c9;
  border-bottom: 1px solid #00a1c9;
  box-shadow: 1px 0 0 #00a1c9 inset;
}

.link {
  display: flex;
  align-items: center;
  gap: 5px;
  color: #0073bb;
}

.link svg {
  width: 19px;
  height: 19px;
}

.cb {
  width: 18px;
  height: 18px;
  display: block;
  background-color: #fff;
  border: 1px solid #aab7b8;
  border-radius: 2px;
  flex: none;
}

.cb-mixed,
.cb-on {
  background-color: #0073bb;
  border-color: #0073bb;
}

.cb-mixed {
  position: relative;
}

.cb-mixed::after {
  content: "";
  position: absolute;
  left: 3px;
  right: 3px;
  top: 6.5px;
  height: 3px;
  background-color: #fff;
}

.cb-on svg {
  width: 16px;
  height: 16px;
}

.hscroll {
  height: 14px;
  flex: none;
  display: flex;
  align-items: center;
  background-color: #f1f1f1;
}

.hscroll .thumb {
  height: 100%;
  background-color: #bfbfbf;
}

.sg-hscroll {
  margin-bottom: 2px;
}

.sg-hscroll .thumb {
  width: 1015px;
  margin-right: auto;
}

.rule-hscroll {
  height: 16px;
}

.rule-hscroll .thumb {
  width: 997px;
  margin: 0 auto 0 367px;
}

/* lower pane */
.bottom-pane {
  flex: 1;
  min-height: 0;
  display: flex;
  flex-direction: column;
  background-color: #f2f3f3;
}

.split-bar {
  height: 45px;
  flex: none;
  display: flex;
  align-items: center;
  justify-content: flex-end;
  position: relative;
  padding-right: 27px;
}

.handle {
  position: absolute;
  left: 659px;
  top: 20px;
  width: 24px;
  height: 6px;
  border-top: 1px solid #879596;
  border-bottom: 1px solid #879596;
}

.view-btns {
  display: flex;
  gap: 30px;
  margin-top: 5px;
}

.view-btns svg {
  width: 20px;
  height: 20px;
}

.bottom-row {
  flex: 1;
  min-height: 0;
  display: flex;
}

.card-wrap {
  width: 1476px;
  flex: none;
  padding: 0 13px 24px 20px;
}

.card {
  background-color: #fff;
  box-shadow: 0 1px 1px rgba(0, 0, 0, 0.3), 0 0 1px rgba(0, 0, 0, 0.2);
  overflow: hidden;
}

.card .pane-head {
  height: 126px;
}

.card .pane-title {
  font-size: 22px;
}

.bottom-scroll .thumb {
  flex: none;
  height: 256px;
  margin-top: auto;
}

.top-scroll .thumb {
  flex: none;
  height: 170px;
  margin: 67px 0 auto;
}

.odd {
  background-color: #fafafa;
}

.rule-cols.thead .th {
  margin-top: 15px;
}

.rule-cols .td {
  padding: 2px 0 0 24px;
}

.rule-cols .th:first-child {
  padding-left: 34px;
}

.rule-cols.tr .td:first-child {
  padding-left: 33px;
}

/* footer */
.footer {
  height: 36px;
  flex: none;
  display: flex;
  align-items: center;
  padding: 0 25px;
  font-size: 14.5px;
  color: #d5dbdb;
  background-color: #232f3e;
  letter-spacing: -0.05px;
}

.foot-feedback {
  color: #fff;
}

.foot-lang {
  margin-left: 31px;
  color: #aab7b8;
}

.foot-lang a {
  color: #fff;
}

.foot-ext {
  width: 18px;
  height: 18px;
  margin-left: 4px;
  color: #fff;
}

.foot-copy {
  margin: 0 7px 0 auto;
  color: #fff;
}

.foot-link {
  margin-left: 31px;
  color: #fff;
}
```
